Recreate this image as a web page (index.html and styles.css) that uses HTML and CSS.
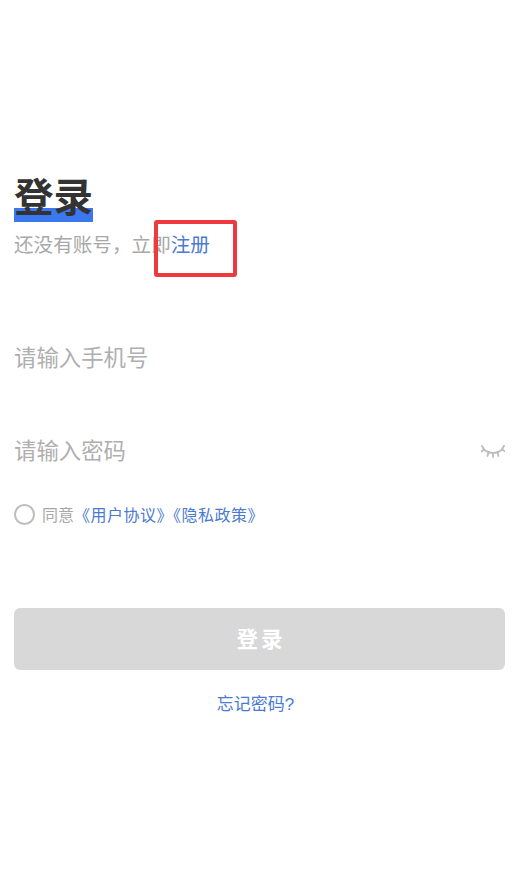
FILE: index.html
```html
<!DOCTYPE html>
<html lang="zh-CN">
<head>
  <meta charset="UTF-8" />
  <meta name="viewport" content="width=device-width, initial-scale=1.0" />
  <title>登录</title>
  <link rel="stylesheet" href="styles.css">
</head>
<body>
  <main class="login">
    <h1 class="login-title"><span class="title-text">登录</span></h1>
    <p class="login-sub">
      还没有账号，立即<a class="link" href="#">注册</a>
      <span class="mark-box"></span>
    </p>

    <div class="field field-phone">
      <input class="field-input" type="text" placeholder="请输入手机号" />
    </div>
    <div class="field field-pwd">
      <input class="field-input" type="password" placeholder="请输入密码" />
      <svg class="eye" width="24" height="14" viewBox="0 0 24 14" fill="none" stroke="#bcbcbc" stroke-width="1.8" stroke-linecap="round">
        <path d="M3 4.5 C8 9 16 9 21 4.5" />
        <path d="M3 4.5 L1 1" />
        <path d="M3 4.5 L0.5 6.5" />
        <path d="M7.5 7.5 L6.5 11" />
        <path d="M12 8.2 L12 12" />
        <path d="M16.5 7.5 L17.5 11" />
        <path d="M21 4.5 L23 0.8" />
        <path d="M21 4.5 L23.5 6" />
      </svg>
    </div>

    <div class="agree">
      <span class="radio"></span>
      <span class="agree-text">同意<a class="link agree-link" href="#">《用户协议》《隐私政策》</a></span>
    </div>

    <button class="btn-login">登录</button>
    <div class="forgot"><a class="link" href="#">忘记密码?</a></div>
  </main>
</body>
</html>
```

FILE: styles.css
```css
* {
  box-sizing: border-box;
}

body {
  margin: 0;
  background: #fff;
  font-family: "Liberation Sans", "Noto Sans CJK SC", sans-serif;
}

.login {
  padding: 174px 9px 0 14px;
}

/* Titulo */
.login-title {
  margin: 0;
  font-size: 39.5px;
  line-height: 48px;
  height: 48px;
  color: #333;
  font-weight: 700;
}

.title-text {
  display: inline-block;
  height: 48px;
  background: linear-gradient(#3b78f0, #3b78f0) no-repeat left bottom / 100% 14px;
}

.login-sub {
  position: relative;
  margin: 10px 0 0;
  font-size: 19.6px;
  line-height: 26px;
  color: #a8a8a8;
}

.link {
  color: #4a7bd0;
  text-decoration: none;
}

/* Recuadro rojo encima del enlace */
.mark-box {
  position: absolute;
  left: 140px;
  top: -12px;
  width: 83px;
  height: 57px;
  border: 4px solid #ee3a3f;
  border-radius: 3px;
}

/* Campos */
.field {
  display: flex;
  align-items: center;
  height: 32px;
}

.field-phone {
  margin-top: 85px;
}

.field-pwd {
  margin-top: 61px;
}

.field-input {
  flex: 1;
  min-width: 0;
  border: none;
  outline: none;
  padding: 0;
  font-family: inherit;
  font-size: 22.4px;
  background: transparent;
}

.field-input::placeholder {
  color: #afafaf;
  opacity: 1;
}

.eye {
  flex: none;
}

/* Acuerdo */
.agree {
  display: flex;
  align-items: center;
  gap: 7px;
  margin-top: 35px;
  height: 22px;
}

.radio {
  width: 21px;
  height: 21px;
  border: 2px solid #bdbdbd;
  border-radius: 50%;
}

.agree-text {
  font-size: 16px;
  color: #a8a8a8;
}

.agree-link {
  letter-spacing: 0.5px;
}

.btn-login {
  display: block;
  width: 100%;
  height: 62px;
  margin-top: 83px;
  padding: 0 0 4px 3px;
  border: none;
  border-radius: 6px;
  background: #d8d8d8;
  color: #fff;
  font-family: inherit;
  font-size: 21.5px;
  font-weight: 700;
  letter-spacing: 3px;
}

.forgot {
  margin-top: 23px;
  padding-right: 8px;
  text-align: center;
  font-size: 17px;
  line-height: 24px;
}
```
